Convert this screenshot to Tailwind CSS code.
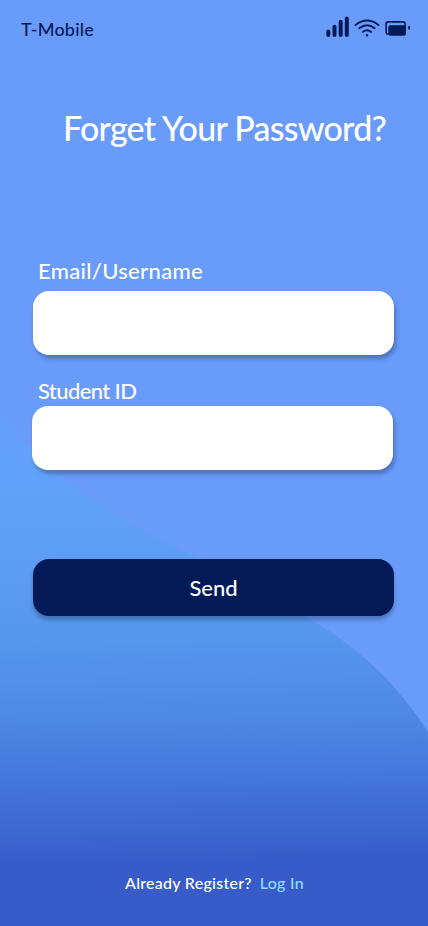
<!DOCTYPE html>
<html lang="en">
<head>
<meta charset="utf-8">
<meta name="viewport" content="width=device-width, initial-scale=1">
<title>Forget Your Password?</title>
<script src="https://cdn.jsdelivr.net/npm/@tailwindcss/browser@4"></script>
</head>
<body class="bg-[#699bfb]">
<main class="relative isolate flex h-[926px] w-[428px] flex-col overflow-hidden bg-[#699bfb] font-['Lato',sans-serif] font-medium text-white">
  <svg class="absolute inset-0 -z-10" width="428" height="926" viewBox="0 0 428 926" aria-hidden="true">
    <defs>
      <linearGradient id="wave" gradientUnits="userSpaceOnUse" x1="200" y1="408" x2="208" y2="926">
        <stop offset="0" stop-color="#659ffb"/>
        <stop offset=".12" stop-color="#62a2fa"/>
        <stop offset=".25" stop-color="#5e9ff5"/>
        <stop offset=".45" stop-color="#5696ed"/>
        <stop offset=".62" stop-color="#4c86e2"/>
        <stop offset=".76" stop-color="#416fd7"/>
        <stop offset=".88" stop-color="#375bc8"/>
        <stop offset="1" stop-color="#375bc8"/>
      </linearGradient>
    </defs>
    <path fill="url(#wave)" d="M0 407C18 437 43 463 76 488C112 514 152 534 190 554C228 574 266 594 303 615C353 643 396 681 428 732V926H0Z"/>
  </svg>

  <header class="flex h-[60px] shrink-0 items-center justify-between pl-[21px] pr-[17px] text-[#031a56]">
    <span class="mb-[3px] text-[18px] leading-6 tracking-[0.2px]">T-Mobile</span>
    <svg class="mb-[6px]" width="86" height="24" viewBox="325 15 86 24" fill="none" aria-hidden="true">
      <g stroke="#031a56" stroke-width="4" stroke-linecap="round">
        <path d="M328.3 31.5V35M334.5 26.7V35M340.7 21.7V35M346.8 18.6V35"/>
      </g>
      <g stroke="#031a56" stroke-width="1.9" stroke-linecap="round">
        <path d="M355.5 25Q367 16.2 378.5 25M359.3 28.2Q367 22.3 374.7 28.2M363 31.8Q367 28.7 371 31.8"/>
      </g>
      <circle cx="367" cy="35.2" r="1.2" fill="#031a56"/>
      <rect x="386.1" y="21.9" width="19" height="12" rx="2" stroke="#031a56" stroke-width="1.6"/>
      <rect x="388.3" y="25.3" width="17.7" height="10.4" rx="2" fill="#031a56"/>
      <rect x="408.2" y="26" width="1.8" height="3.5" rx=".6" fill="#031a56"/>
    </svg>
  </header>

  <h1 class="mt-[47px] shrink-0 whitespace-nowrap pl-[63px] text-[34px] leading-[42px] tracking-[-0.77px]">Forget Your Password?</h1>

  <form class="flex flex-col pl-[33px] pr-[34px] pt-[106px]">
    <label for="email" class="h-9 pl-[5px] text-[22px] leading-[32px] tracking-[0.33px]">Email/Username</label>
    <input id="email" type="text" class="h-16 w-[361px] rounded-2xl bg-white px-4 text-xl text-[#031a56] shadow-[2px_4px_4px_rgba(0,0,0,0.25)] outline-none">
    <label for="student" class="mt-5 h-[31px] pl-[5px] text-[22px] leading-[32px] tracking-[-0.6px]">Student ID</label>
    <input id="student" type="text" class="-ml-px h-16 w-[361px] rounded-2xl bg-white px-4 text-xl text-[#031a56] shadow-[2px_4px_4px_rgba(0,0,0,0.25)] outline-none">
    <button type="button" class="mt-[89px] h-[57px] w-[361px] rounded-2xl bg-[#031a56] text-[22px] shadow-[0_4px_4px_rgba(0,0,0,0.25)]">Send</button>
  </form>

  <footer class="mt-auto flex h-[55px] items-start gap-[8px] pl-[125px] text-[16px] leading-6 tracking-[0.27px]">
    <span>Already Register?</span>
    <a href="#" class="text-[#8fdcff]">Log In</a>
  </footer>
</main>
</body>
</html>
